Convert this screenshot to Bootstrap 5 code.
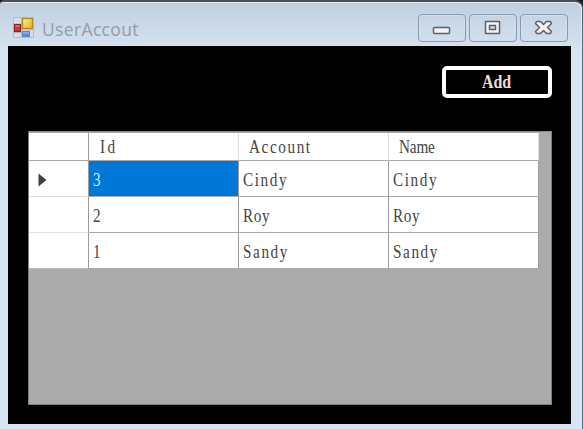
<!DOCTYPE html>
<html lang="en">
<head>
<meta charset="utf-8">
<title>UserAccout</title>
<link href="https://cdn.jsdelivr.net/npm/bootstrap@5.3.0/dist/css/bootstrap.min.css" rel="stylesheet">
<style>
body{background:#15181d;width:583px;height:429px}
.window{width:583px;height:429px;padding:0 11px 5px 8px;background:linear-gradient(#c0cedd 0,#cbd9e8 25px,#d7e4f2 50px,#d7e4f2 100%);border-top:2px solid #4b5058;border-right:1px solid #59616b;border-top-left-radius:4px;border-top-right-radius:8px;box-shadow:inset -1px 1px #e4edf5}
.titlebar{height:44px;padding:12px 3px 0 5px}
.app-icon{margin-top:3px}
.caption{font:17.5px/20px "Open Sans","Noto Sans",sans-serif;color:#969da4;margin:5px 0 0 8px;letter-spacing:.35px}
.winbtn{width:48px;height:28px;border:1px solid #8998b3;border-radius:4px;background:transparent;box-shadow:inset 0 0 0 1px #d2deeb}
.client{background:#000;height:378px;padding:19px 19px 19px 20px}
.add-btn{width:110px;height:32px;margin-top:1px;border:4px solid #fff;border-radius:5px;background:#000;color:#f0dfd2;font:bold 18px/24px "Liberation Serif",serif}
.add-btn span{display:inline-block;transform:scaleX(.88)}
.datagrid{margin-top:33px;height:274px;background:#ababab;border:1px solid #7d7d7d;border-top-color:#888;padding-top:1px}
.datagrid table{table-layout:fixed;width:510px;border-collapse:separate;border-spacing:0;font:19px/20px "Liberation Serif",serif;color:#444}
.datagrid th,.datagrid td{background:#fff;padding:0 0 0 4px;border-right:1px solid #9c9c9c;border-bottom:1px solid #aaa;font-weight:400;white-space:nowrap;vertical-align:middle}
.datagrid th{height:28px;padding-left:10px}
.datagrid td{height:36px;padding-top:3px}
.datagrid thead th:nth-child(n+2){border-right-color:#dedede}
.datagrid tbody th{padding-left:9px;padding-top:3px;border-bottom-color:#e2e2e2;height:36px}
.datagrid tbody tr:last-child th{border-bottom-color:#bbb}
.datagrid .picked{background:#0078d7;color:#d9edff}
.datagrid span{display:inline-block;transform:scaleX(.8);transform-origin:0 50%;letter-spacing:2px}
.datagrid .w-id{letter-spacing:3px;margin-left:1px}.datagrid .w-roy{letter-spacing:.8px}.datagrid .w-name{letter-spacing:-.2px}
</style>
<script src="https://cdn.jsdelivr.net/npm/bootstrap@5.3.0/dist/js/bootstrap.bundle.min.js"></script>
</head>
<body class="overflow-hidden">
<main class="window">
<header class="titlebar d-flex align-items-start">
<svg class="app-icon" width="21" height="21" viewBox="0 0 21 21"><defs><linearGradient id="y" x2="1" y2="1"><stop stop-color="#fff09a"/><stop offset="1" stop-color="#e8ac13"/></linearGradient><linearGradient id="b" x2="0" y2="1"><stop stop-color="#8fc0f5"/><stop offset="1" stop-color="#3e79d4"/></linearGradient></defs><path d="M.5.5h20v20H.5zM8.500 .5v20M.5 7.500h8M.5 15.500h8M8.500 13h12" fill="#d5dee8" stroke="#b4bfcb"/><rect x="9.500" y="1.500" width="10" height="10" fill="url(#y)" stroke="#b38a22" stroke-width="1.300"/><rect x="1.500" y="7.500" width="6" height="7" fill="#c43d35" stroke="#8d2425" stroke-width="1.200"/><path d="M2.500 9h4" stroke="#e99b8d"/><rect x="9.500" y="14.500" width="7" height="5" fill="url(#b)" stroke="#5887ca"/></svg>
<h1 class="caption">UserAccout</h1>
<div class="ms-auto d-flex" style="gap:3px">
<button class="winbtn p-0 d-flex align-items-center justify-content-center" aria-label="Minimize"><svg width="46" height="26"><rect x="14.500" y="12.500" width="16" height="6" rx="1" fill="#f3f3f3" stroke="#596070" stroke-width="1.500"/></svg></button>
<button class="winbtn p-0 d-flex align-items-center justify-content-center" aria-label="Maximize"><svg width="46" height="26"><path fill-rule="evenodd" d="M15.500 6.500h14v12h-14zM19.500 10.500v4h6v-4z" fill="#f3f3f3" stroke="#596070" stroke-width="1.500" stroke-linejoin="round"/></svg></button>
<button class="winbtn p-0 d-flex align-items-center justify-content-center" aria-label="Close"><svg width="46" height="26"><path d="M15.500 6.500h4l3 3 3-3h4l1 2-4 4 4 4-1 2h-4l-3-3-3 3h-4l-1-2 4-4-4-4z" fill="#f3f3f3" stroke="#596070" stroke-width="1.500" stroke-linejoin="round"/></svg></button>
</div>
</header>
<section class="client">
<div class="d-flex justify-content-end"><button class="add-btn p-0"><span>Add</span></button></div>
<div class="datagrid">
<table>
<colgroup><col style="width:60px"><col style="width:150px"><col style="width:150px"><col style="width:150px"></colgroup>
<thead><tr><th></th><th><span class="w-id">Id</span></th><th><span>Account</span></th><th><span class="w-name">Name</span></th></tr></thead>
<tbody>
<tr><th><svg class="d-block" width="10" height="14"><path d="M.5.500 8.500 7 .5 13.500z" fill="#404040"/></svg></th><td class="picked"><span>3</span></td><td><span>Cindy</span></td><td><span>Cindy</span></td></tr>
<tr><th></th><td><span>2</span></td><td><span class="w-roy">Roy</span></td><td><span class="w-roy">Roy</span></td></tr>
<tr><th></th><td><span>1</span></td><td><span>Sandy</span></td><td><span>Sandy</span></td></tr>
</tbody>
</table>
</div>
</section>
</main>
</body>
</html>
